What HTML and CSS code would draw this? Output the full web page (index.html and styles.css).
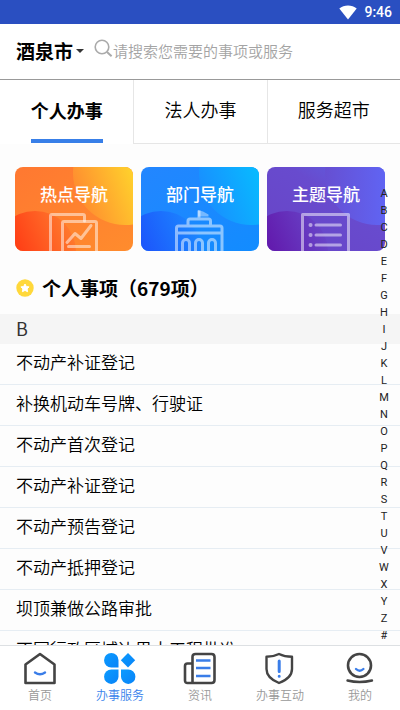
FILE: index.html
```html
<!DOCTYPE html>
<html lang="zh-CN">
<head>
<meta charset="utf-8">
<meta name="viewport" content="width=device-width, initial-scale=1">
<title>办事服务</title>
<link rel="stylesheet" href="styles.css">
</head>
<body>
<div class="app">
  <div class="status">
    <svg width="18" height="15" viewBox="0 0 18 15" aria-hidden="true"><path d="M9 14.5 0.3 3.6C5-.6 13-.6 17.7 3.6z" fill="#fff"/></svg>
    <span>9:46</span>
  </div>

  <header class="header">
    <button class="city" type="button">酒泉市<span class="caret"></span></button>
    <label class="search">
      <svg width="19" height="19" viewBox="0 0 19 19" fill="none" stroke="#aaa" stroke-width="1.6" aria-hidden="true"><circle cx="8" cy="8" r="6.8"/><path d="M13 13l4.6 4.2" stroke-width="2"/></svg>
      <input type="search" placeholder="请搜索您需要的事项或服务" aria-label="搜索">
    </label>
  </header>

  <nav class="tabs">
    <a class="tab active" href="#personal"><span>个人办事</span></a>
    <a class="tab" href="#corporate"><span>法人办事</span></a>
    <a class="tab" href="#market"><span>服务超市</span></a>
  </nav>

  <main class="content">
    <div class="cards">
      <a class="card" href="#hot">
        <svg class="art" viewBox="0 0 118 84" preserveAspectRatio="xMidYMid slice" aria-hidden="true">
          <defs>
            <linearGradient id="o1" x1="0" y1="0" x2="1" y2="1"><stop offset="0" stop-color="#ff7831"/><stop offset="1" stop-color="#ff8c2d"/></linearGradient>
            <linearGradient id="o2" gradientUnits="userSpaceOnUse" x1="118" y1="8" x2="58" y2="30"><stop offset="0" stop-color="#ffd02c"/><stop offset="1" stop-color="#ff8830"/></linearGradient>
            <linearGradient id="o3" gradientUnits="userSpaceOnUse" x1="0" y1="80" x2="56" y2="56"><stop offset="0" stop-color="#ff3d15"/><stop offset="1" stop-color="#ff7c2f"/></linearGradient>
          </defs>
          <rect width="118" height="84" fill="url(#o1)"/>
          <circle cx="110" cy="6" r="52" fill="url(#o2)"/>
          <circle cx="20" cy="85" r="41" fill="url(#o3)"/>
          <g fill="none" stroke="#fff" stroke-opacity=".5" stroke-width="3" stroke-linejoin="round" stroke-linecap="round">
            <path d="M35.500 86V49q0-1.500 1.500-1.500h31q1.500 0 1.500 1.500v5"/>
            <path d="M47.500 86V56q0-1.500 1.500-1.500h31q1.500 0 1.500 1.500v30"/>
            <path d="M52 75.500l8-9 6 5 10-13M53.500 79.500h21"/>
          </g>
        </svg>
        <span>热点导航</span>
      </a>
      <a class="card" href="#department">
        <svg class="art" viewBox="0 0 118 84" preserveAspectRatio="xMidYMid slice" aria-hidden="true">
          <defs>
            <linearGradient id="b1" x1="0" y1="0" x2="1" y2="1"><stop offset="0" stop-color="#2386ff"/><stop offset="1" stop-color="#128cff"/></linearGradient>
            <linearGradient id="b2" gradientUnits="userSpaceOnUse" x1="118" y1="8" x2="58" y2="30"><stop offset="0" stop-color="#08baff"/><stop offset="1" stop-color="#1a8cff"/></linearGradient>
            <linearGradient id="b3" gradientUnits="userSpaceOnUse" x1="0" y1="80" x2="56" y2="56"><stop offset="0" stop-color="#1d55fb"/><stop offset="1" stop-color="#1b88ff"/></linearGradient>
          </defs>
          <rect width="118" height="84" fill="url(#b1)"/>
          <circle cx="110" cy="6" r="52" fill="url(#b2)"/>
          <circle cx="20" cy="85" r="41" fill="url(#b3)"/>
          <g fill="none" stroke="#fff" stroke-opacity=".5" stroke-width="3" stroke-linejoin="round">
            <path d="M58 43.500V52M47 58.500V54q0-2 2-2h18.500q2 0 2 2v4.500M35.500 86V61q0-2 2-2H79q2 0 2 2v25M37 66h42.500"/>
            <path d="M41.500 86V76a3.500 3.500 0 0 1 7 0V86M54.500 86V76a3.500 3.500 0 0 1 7 0V86M67.500 86V76a3.500 3.500 0 0 1 7 0V86"/>
          </g>
          <path d="M57 43l5 1.500 5.500 3v2H57z" fill="#fff" fill-opacity=".4"/>
        </svg>
        <span>部门导航</span>
      </a>
      <a class="card" href="#theme">
        <svg class="art" viewBox="0 0 118 84" preserveAspectRatio="xMidYMid slice" aria-hidden="true">
          <defs>
            <linearGradient id="p1" x1="0" y1="1" x2="1" y2="0"><stop offset="0" stop-color="#6844c6"/><stop offset="0.600" stop-color="#684bce"/><stop offset="1" stop-color="#5a66e8"/></linearGradient>
            <linearGradient id="p2" gradientUnits="userSpaceOnUse" x1="118" y1="30" x2="58" y2="30"><stop offset="0" stop-color="#6064f3"/><stop offset="1" stop-color="#664fd2"/></linearGradient>
            <linearGradient id="p3" gradientUnits="userSpaceOnUse" x1="0" y1="80" x2="56" y2="56"><stop offset="0" stop-color="#6219ac"/><stop offset="1" stop-color="#6846c9"/></linearGradient>
          </defs>
          <rect width="118" height="84" fill="url(#p1)"/>
          <circle cx="110" cy="6" r="52" fill="url(#p2)"/>
          <circle cx="20" cy="85" r="41" fill="url(#p3)"/>
          <g fill="none" stroke="#fff" stroke-opacity=".5" stroke-width="3" stroke-linejoin="round" stroke-linecap="round">
            <path d="M35.500 86V47.500h46V86"/>
            <path d="M49 58h24.500M49 68h24.500M49 78h24.500"/>
            <path d="M43.500 58h.1M43.500 68h.1M43.500 78h.1" stroke-width="4"/>
          </g>
        </svg>
        <span>主题导航</span>
      </a>
    </div>

    <h2 class="title">
      <svg width="18" height="18" viewBox="0 0 18 18" aria-hidden="true"><circle cx="9" cy="9" r="8.700" fill="#ffd83b"/><path d="M9 5l1.300 2.500 2.800.4-2 2 .5 2.800L9 11.400l-2.600 1.300.5-2.800-2-2 2.800-.4z" fill="#fff" stroke="#fff" stroke-width="1" stroke-linejoin="round"/></svg>
      个人事项（679项）
    </h2>

    <h3 class="letter">B</h3>
    <ul class="list">
      <li><a href="#i1">不动产补证登记</a></li>
      <li><a href="#i2">补换机动车号牌、行驶证</a></li>
      <li><a href="#i3">不动产首次登记</a></li>
      <li><a href="#i4">不动产补证登记</a></li>
      <li><a href="#i5">不动产预告登记</a></li>
      <li><a href="#i6">不动产抵押登记</a></li>
      <li><a href="#i7">坝顶兼做公路审批</a></li>
      <li><a href="#i8">不同行政区域边界水工程批准</a></li>
    </ul>
  </main>

  <nav class="index" aria-label="字母索引">
    <a href="#A">A</a><a href="#B">B</a><a href="#C">C</a><a href="#D">D</a><a href="#E">E</a><a href="#F">F</a><a href="#G">G</a><a href="#H">H</a><a href="#I">I</a><a href="#J">J</a><a href="#K">K</a><a href="#L">L</a><a href="#M">M</a><a href="#N">N</a><a href="#O">O</a><a href="#P">P</a><a href="#Q">Q</a><a href="#R">R</a><a href="#S">S</a><a href="#T">T</a><a href="#U">U</a><a href="#V">V</a><a href="#W">W</a><a href="#X">X</a><a href="#Y">Y</a><a href="#Z">Z</a><a href="#other">#</a>
  </nav>

  <nav class="bottom">
    <a href="#home">
      <svg width="34" height="34" viewBox="0 0 34 34" fill="none" aria-hidden="true"><path d="M2.500 31V12.500L17 2l14.500 10.500V31z" stroke="#444" stroke-width="2.600" stroke-linejoin="round"/><path d="M12 20.500q5 3.500 10 0" stroke="#3a7de8" stroke-width="2.400" stroke-linecap="round"/></svg>
      首页
    </a>
    <a class="current" href="#services">
      <svg width="34" height="34" viewBox="0 0 34 34" aria-hidden="true"><defs><linearGradient id="s" x1="0" y1="0" x2="1" y2="1"><stop offset="0" stop-color="#0b9bff"/><stop offset="1" stop-color="#0883f8"/></linearGradient></defs><g fill="url(#s)"><path d="M8.300 1A7.200 7.200 0 0 1 15.500 8.200V15.500H8.300a7.200 7.200 0 0 1 0-14.500z"/><path d="M25 1l7.200 7.200L25 15.400l-7.200-7.200z"/><path d="M8.300 17.500h7.200v7.300A7.200 7.200 0 1 1 8.300 17.500z"/><path d="M18 17.500h7.200A7.200 7.200 0 1 1 18 24.800z"/></g></svg>
      办事服务
    </a>
    <a href="#news">
      <svg width="34" height="34" viewBox="0 0 34 34" fill="none" aria-hidden="true"><g stroke="#444" stroke-width="2.600" stroke-linejoin="round"><path d="M9.500 31V5q0-3 3-3H28.500q3 0 3 3v23q0 3-3 3H4.500Q2 31 2 28.500V14q0-2.500 2.500-2.500h5"/></g><path d="M13 8.500h14.500M13 16h14.500M13 24h14.500" stroke="#3a7de8" stroke-width="2.400"/></svg>
      资讯
    </a>
    <a href="#interact">
      <svg width="34" height="34" viewBox="0 0 34 34" fill="none" aria-hidden="true"><path d="M16 2Q21.500 4.800 29 4.800V17c0 7-5 11-13 14C8.500 28 3.500 24 3.500 17V4.800Q10.500 4.800 16 2z" stroke="#444" stroke-width="2.400" stroke-linejoin="round"/><path d="M16.200 9v10.500M16.200 24.200v.1" stroke="#3a7de8" stroke-width="3" stroke-linecap="round"/></svg>
      办事互动
    </a>
    <a href="#mine">
      <svg width="34" height="34" viewBox="0 0 34 34" fill="none" aria-hidden="true"><circle cx="16.500" cy="13.500" r="11.500" stroke="#444" stroke-width="2.600"/><path d="M4.500 28.500q12 3 24.500 0" stroke="#444" stroke-width="2.400" stroke-linecap="round"/><path d="M13 17q3.700 3.500 7.400 0" stroke="#3a7de8" stroke-width="2.400" stroke-linecap="round"/></svg>
      我的
    </a>
  </nav>
</div>
</body>
</html>
```
FILE: styles.css
```css
* { box-sizing: border-box; }
body {
  margin: 0;
  background: #fdfdfd;
  color: #000;
  font-family: "Noto Sans CJK SC", "Noto Sans", sans-serif;
  font-weight: 350;
}
a { color: inherit; text-decoration: none; }

.app {
  position: relative;
  display: flex;
  flex-direction: column;
  height: 100vh;
  overflow: hidden;
}

.status {
  flex: none;
  display: flex;
  align-items: center;
  justify-content: flex-end;
  gap: 7px;
  height: 24px;
  padding-right: 8px;
  background: #2a4fc1;
  color: #fff;
  font: 500 14px/24px Roboto, sans-serif;
}

.header {
  flex: none;
  display: flex;
  align-items: center;
  height: 56px;
  padding: 0 16px 2px;
  border-bottom: 1px solid #999;
  background: #fff;
}
.city {
  display: flex;
  align-items: center;
  gap: 3px;
  padding: 0;
  border: 0;
  background: none;
  color: #000;
  font: 700 19px/28px "Noto Sans CJK SC", sans-serif;
}
.caret {
  border: 4px solid transparent;
  border-top-color: #333;
  border-bottom: 0;
}
.search {
  flex: 1;
  display: flex;
  align-items: center;
  margin-left: 10px;
}
.search svg { flex: none; margin-bottom: 4px; }
.search input {
  flex: 1;
  min-width: 0;
  padding: 0;
  border: 0;
  outline: 0;
  background: none;
  font: 350 15px/24px "Noto Sans CJK SC", sans-serif;
}
.search input::placeholder { color: #a4a4a4; }

.tabs {
  flex: none;
  display: grid;
  grid-template-columns: repeat(3, 1fr);
  height: 64px;
}
.tab {
  display: flex;
  justify-content: center;
  border-bottom: 1px solid #e6e6e6;
  background: #fff;
  font-size: 18px;
  line-height: 58px;
}
.tab + .tab { border-left: 1px solid #e6e6e6; }
.tab.active { border-bottom: 0; font-weight: 700; line-height: 60px; }
.tab.active span { height: 63px; border-bottom: 4px solid #387fe8; }

.content { flex: 1; min-height: 0; overflow: hidden; }

.cards {
  display: grid;
  grid-template-columns: repeat(3, 1fr);
  gap: 8px;
  padding: 23px 15px 0;
}
.card {
  position: relative;
  height: 84px;
  padding-top: 14px;
  border-radius: 8px;
  overflow: hidden;
  color: #fff;
  font-size: 17px;
  font-weight: 500;
  line-height: 26px;
  text-align: center;
}
.card span { position: relative; }
.art { position: absolute; inset: 0; width: 100%; height: 100%; }

.title {
  display: flex;
  align-items: center;
  gap: 8px;
  height: 63px;
  margin: 0;
  padding: 10px 16px 0;
  font-size: 19px;
  font-weight: 700;
}
.letter {
  margin: 0;
  padding: 0 16px 2px;
  background: #f5f5f5;
  color: #333;
  font-size: 18px;
  font-weight: 400;
  line-height: 28px;
}
.list { margin: 0; padding: 0; list-style: none; }
.list a {
  display: block;
  padding: 6px 16px 10px;
  border-bottom: 1px solid #e6edf3;
  font-size: 17px;
  line-height: 24px;
}

.index {
  position: absolute;
  top: 185px;
  right: 8px;
  width: 16px;
  text-align: center;
  color: #222;
  font: 11px/17px Roboto, sans-serif;
}
.index a { display: block; }

.bottom {
  flex: none;
  display: grid;
  grid-template-columns: repeat(5, 1fr);
  height: 65px;
  padding-top: 6px;
  border-top: 1px solid #dde0e3;
  background: #fff;
  color: #999;
  font-size: 12px;
  line-height: 18px;
}
.bottom a { display: flex; flex-direction: column; align-items: center; }
.bottom .current { color: #3a84ec; }
```
